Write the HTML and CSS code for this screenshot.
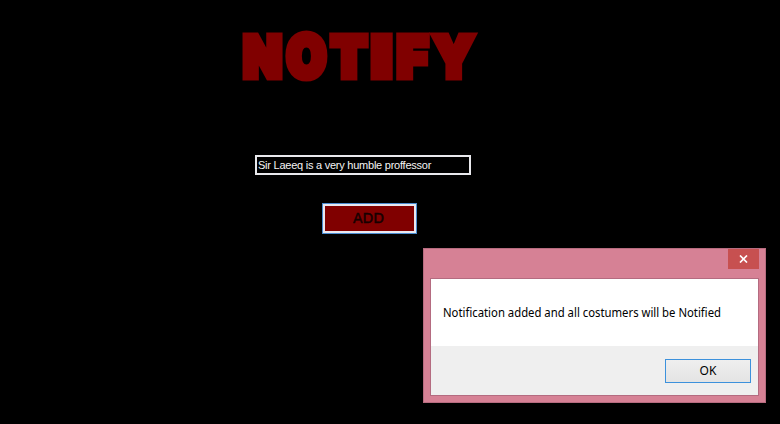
FILE: index.html
```html
<!DOCTYPE html>
<html lang="en">
<head>
<meta charset="utf-8">
<title>Notify</title>
<link rel="stylesheet" href="styles.css">
</head>
<body>
<main class="form">
  <h1 class="title"><svg class="logo" width="240" height="60" viewBox="0 0 240 60"><text transform="translate(22.5 49.5) scale(.88 1)">N</text><text transform="translate(66.5 50) scale(.89 1.01)">O</text><text transform="translate(109 49.5) scale(.92 1)">T</text><text transform="translate(141.5 49.5) scale(1.22 1)">I</text><text transform="translate(172.5 49.5) scale(.93 1)">F</text><text transform="translate(213.5 49.5) scale(.92 1)">Y</text></svg></h1>
  <input class="message" type="text" value="Sir Laeeq is a very humble proffessor" aria-label="Notification">
  <button class="add" type="button">ADD</button>
</main>
<section class="dialog" role="dialog">
  <header class="titlebar">
    <button class="close" type="button" aria-label="Close"><svg width="9" height="8" viewBox="0 0 9 8"><path d="M1 .5 8 7.5M8 .5 1 7.5"/></svg></button>
  </header>
  <div class="panel">
    <p class="text"><svg width="300" height="24"><text x="0" y="13" textLength="278" lengthAdjust="spacingAndGlyphs">Notification added and all costumers will be Notified</text></svg></p>
    <footer class="actions"><button class="ok" type="button">OK</button></footer>
  </div>
</section>
</body>
</html>
```
FILE: styles.css
```css
* { box-sizing: border-box; }
body { margin: 0; width: 780px; height: 424px; overflow: hidden; background: #000; }
button, input { padding: 0; margin: 0; border-radius: 0; outline: 0; }
.form { display: flex; flex-direction: column; width: 780px; }
.title { margin: 27px 0 0 240px; height: 60px; }
.logo {
  display: block; overflow: visible; text-anchor: middle;
  font: 900 57px Inter, sans-serif; fill: #800000; stroke: #800000; stroke-width: 7px;
}
.message {
  margin: 68px 0 0 255px; width: 216px; height: 20px; padding: 0 1px 1px;
  border: 2px solid #e9e9ed; background: #000; color: #f4f4f4;
  font: 11px "Liberation Sans", sans-serif; letter-spacing: -.24px;
}
.add {
  margin: 28px 0 0 322px; width: 95px; height: 31px; padding: 0 2px 2px 0;
  border: 1px solid #4a8bd0; box-shadow: inset 0 0 0 2px #e8e8f0;
  background: #800000; color: #160000; font: 14px "DejaVu Sans", sans-serif;
  -webkit-text-stroke: .5px #160000;
}
.dialog {
  position: absolute; left: 423px; top: 248px; width: 343px; height: 155px;
  padding: 0 6px; border: 1px solid #b76c80; background: #d68195;
}
.titlebar { height: 29px; display: flex; justify-content: flex-end; }
.close {
  width: 31px; height: 20px; border: 0; background: #c75050;
  display: flex; align-items: center; justify-content: center;
}
.close path { stroke: #fff; stroke-width: 1.7; fill: none; }
.panel { height: 118px; border: 1px solid #b46b80; background: #fff; }
.text { margin: 0; height: 67px; padding: 25px 0 0 12px; }
.text svg { display: block; overflow: visible; font: 12px "Noto Sans", sans-serif; fill: #000; }
.actions {
  height: 49px; padding: 13px 7px 0 0; background: #efefef;
  display: flex; justify-content: flex-end;
}
.ok {
  width: 86px; height: 24px; padding-bottom: 1px; border: 1px solid #3c91dc;
  background: linear-gradient(#efefef, #e4e4e4); color: #000;
  font: 12px "Noto Sans", sans-serif;
}
```
